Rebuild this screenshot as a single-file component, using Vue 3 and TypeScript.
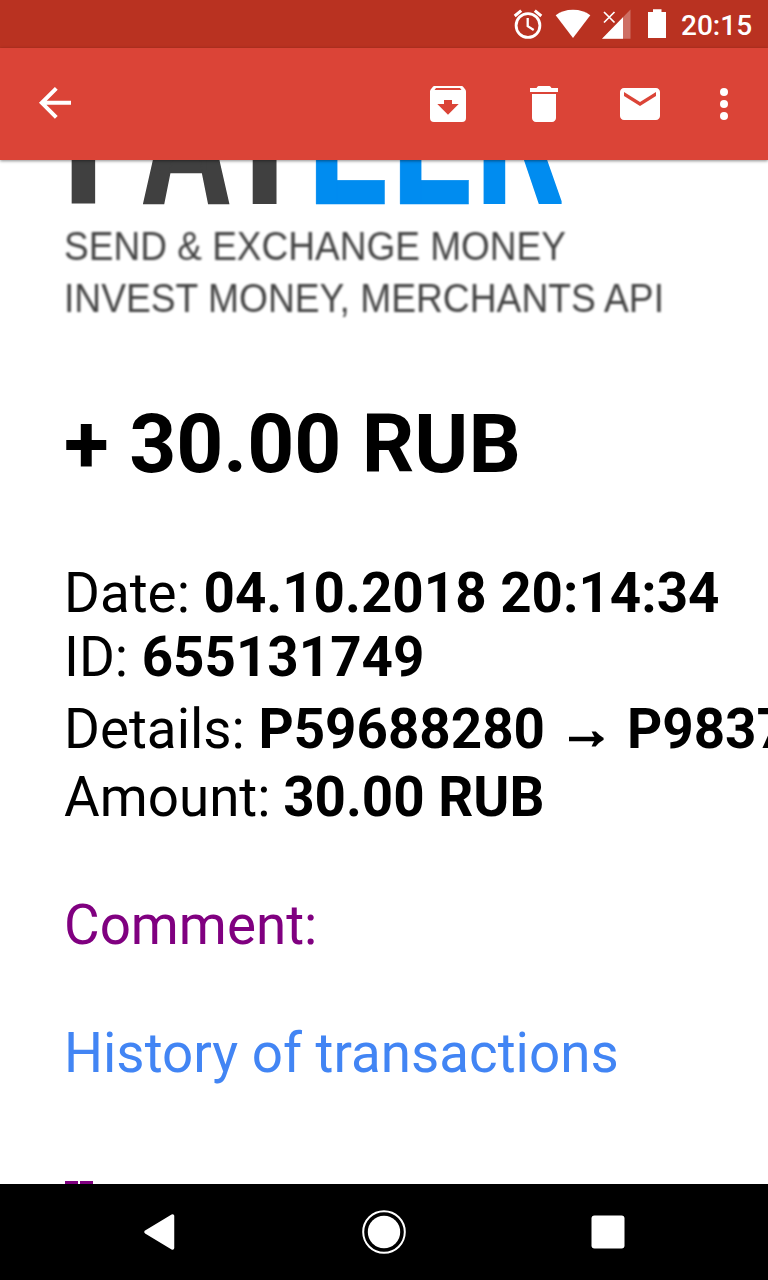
<script setup lang="ts">
interface Row {
  label: string
  value: string
  target?: string
  kind: string
}

interface Letter {
  char: string
  x: number
  stretch: number
  color: string
  outline: number
}

const rows: Row[] = [
  { label: 'Date:', value: '04.10.2018 20:14:34', kind: 'date' },
  { label: 'ID:', value: '655131749', kind: 'id' },
  { label: 'Details:', value: 'P59688280', target: 'P98371', kind: 'details' },
  { label: 'Amount:', value: '30.00 RUB', kind: 'amount' },
]

const letters: Letter[] = [
  { char: 'P', x: 61.5, stretch: 0.77, color: '#404040', outline: 0 },
  { char: 'A', x: 143.5, stretch: 0.61, color: '#404040', outline: 2.4 },
  { char: 'Y', x: 215, stretch: 0.77, color: '#404040', outline: 0 },
  { char: 'E', x: 307, stretch: 0.69, color: '#008cf0', outline: 0.6 },
  { char: 'E', x: 391, stretch: 0.69, color: '#008cf0', outline: 0.6 },
  { char: 'R', x: 475.5, stretch: 0.665, color: '#008cf0', outline: 2 },
]
</script>

<template>
  <div class="screen">
    <header class="status">
      <svg width="182" height="48" viewBox="500 0 182 48" fill="#fff">
        <g fill="none" stroke="#fff">
          <circle cx="528" cy="25.5" r="11.9" stroke-width="2.8" />
          <path d="M527.7 18v8.2l6 3.8" stroke-width="2.3" />
          <path d="M514.7 16l6.5-5.4M541.3 16l-6.5-5.4" stroke-width="3" />
        </g>
        <path d="M555.7 15.3C560.5 11.7 566 9.8 573 9.8s12.500 1.900 17.300 5.500L573 38z" />
        <path d="M630.500 9.500V38.700H602z" fill-opacity=".3" />
        <path d="M623 17.200V38.700H602z" />
        <path d="M604 12l10.500 10.500M614.500 12L604 22.500" fill="none" stroke="#fff" stroke-width="1.700" />
        <path d="M648 12h5V9.300h8.500V12h4.500v26h-18z" />
      </svg>
      <span class="clock">20:15</span>
    </header>

    <nav class="toolbar">
      <svg class="back" width="48" height="48" viewBox="32 80 48 48" fill="none" stroke="#fff" stroke-width="4">
        <path d="M71 102.800H42M56.300 88.300L41.800 102.800l14.500 14.500" />
      </svg>
      <svg width="48" height="48" viewBox="0 0 48 48">
        <path fill="#fff" fill-rule="evenodd" d="M11 6h26c1.200 0 2 .5 2.700 1.400l1.600 2.100c.5.700.7 1.400.7 2.300V38a4 4 0 0 1-4 4H10a4 4 0 0 1-4-4V11.800c0-.9.200-1.600.7-2.300l1.600-2.100C9 6.500 9.800 6 11 6zM12 8l-1.500 2h27L36 8zM20 20v4h-6.700L24 34.700 34.700 24H28v-4z" />
      </svg>
      <svg width="48" height="48" viewBox="0 0 24 24" fill="#fff">
        <path d="M6 19c0 1.100.9 2 2 2h8c1.100 0 2-.9 2-2V7H6zM19 4h-3.300c-.3-.7-.7-1-1.400-1H9.700c-.7 0-1.100.3-1.400 1H5v2h14z" />
      </svg>
      <svg width="48" height="48" viewBox="0 0 24 24" fill="#fff">
        <path d="M20 4H4c-1.100 0-2 .9-2 2v12c0 1.100.9 2 2 2h16c1.100 0 2-.9 2-2V6c0-1.100-.9-2-2-2zm0 4l-8 5-8-5V6l8 5 8-5z" />
      </svg>
      <svg class="more" width="48" height="48" viewBox="0 0 24 24" fill="#fff">
        <circle cx="12" cy="6" r="2" /><circle cx="12" cy="12" r="2" /><circle cx="12" cy="18" r="2" />
      </svg>
    </nav>

    <main class="mail">
      <svg class="logo" width="768" height="170" viewBox="0 160 768 170">
        <g class="brand">
          <text
            v-for="letter in letters"
            :key="letter.x"
            :fill="letter.color"
            :stroke="letter.color"
            :stroke-width="letter.outline"
            :transform="`translate(${letter.x} ${204 - letter.outline / 2}) scale(${letter.stretch} 1)`"
          >{{ letter.char }}</text>
        </g>
        <g class="tagline" fill="#444">
          <text x="64" y="260" textLength="502" lengthAdjust="spacingAndGlyphs">SEND &amp; EXCHANGE MONEY</text>
          <text x="64" y="312" textLength="600" lengthAdjust="spacingAndGlyphs">INVEST MONEY, MERCHANTS API</text>
        </g>
      </svg>
      <h1>+ 30.00 RUB</h1>
      <div v-for="row in rows" :key="row.kind" class="row" :class="row.kind">
        {{ row.label }} <b>{{ row.value }}<template v-if="row.target"><span class="arrow">→</span>{{ row.target }}</template></b>
      </div>
      <div class="row comment">Comment:</div>
      <div class="row history">History of transactions</div>
      <div class="quote"><i></i><i></i></div>
    </main>

    <footer class="navbar">
      <svg width="768" height="96" viewBox="0 1184 768 96" fill="#fff">
        <path d="M146 1232l26.500-16v32z" stroke="#fff" stroke-width="3.500" stroke-linejoin="round" />
        <circle cx="384" cy="1232" r="16.200" />
        <circle cx="384" cy="1232" r="20.800" fill="none" stroke="#fff" stroke-width="2" />
        <rect x="591.500" y="1215.500" width="33" height="33" rx="3" />
      </svg>
    </footer>
  </div>
</template>

<style>
body {
  background: #fff;
}
</style>

<style scoped>
.screen {
  width: 768px;
  height: 1280px;
  display: flex;
  flex-direction: column;
  overflow: hidden;
  background: #fff;
  color: #000;
  font-family: Roboto, "DejaVu Sans", sans-serif;
}
svg {
  display: block;
  flex: none;
}
.status {
  flex: none;
  height: 48px;
  display: flex;
  justify-content: flex-end;
  background: #b93221;
}
.clock {
  width: 86px;
  color: #fff;
  font-size: 28px;
  font-weight: 500;
  line-height: 52px;
  text-indent: -1px;
}
.toolbar {
  flex: none;
  height: 112px;
  box-sizing: border-box;
  display: flex;
  align-items: center;
  gap: 48px;
  padding: 0 20px 0 32px;
  background: #db4437;
  box-shadow: 0 1px 3px rgba(0, 0, 0, 0.45);
  z-index: 1;
}
.back {
  margin-right: auto;
}
.more {
  margin-left: -12px;
}
.mail {
  flex: 1;
  min-height: 0;
  overflow: hidden;
  white-space: nowrap;
}
.brand {
  font-size: 208px;
  font-weight: 700;
  filter: blur(0.6px);
}
.tagline {
  font-family: "Liberation Sans", Arial, sans-serif;
  font-size: 40px;
  filter: blur(0.9px);
}
h1 {
  margin: 66px 0 0 64px;
  height: 96px;
  font-size: 82.1px;
  font-weight: 700;
  line-height: 96px;
}
.row {
  margin-left: 64px;
  height: 64px;
  font-size: 54.75px;
  line-height: 64px;
}
.date {
  margin-top: 69px;
}
.details {
  margin-top: 8px;
}
.amount {
  margin-top: 4px;
}
.amount b {
  margin-left: -1px;
}
.arrow {
  display: inline-block;
  width: 82px;
  padding-left: 1px;
  box-sizing: border-box;
  font-family: "Liberation Sans", sans-serif;
  line-height: 1;
  text-align: center;
  -webkit-text-stroke: 2.2px #000;
}
.comment {
  margin-top: 64px;
  color: #800080;
}
.history {
  margin-top: 64px;
  color: #4285f4;
}
.quote {
  display: flex;
  gap: 2px;
  margin: 96px 0 0 65px;
}
.quote i {
  width: 13px;
  height: 20px;
  background: #800080;
}
.navbar {
  flex: none;
  height: 96px;
  background: #000;
}
</style>
